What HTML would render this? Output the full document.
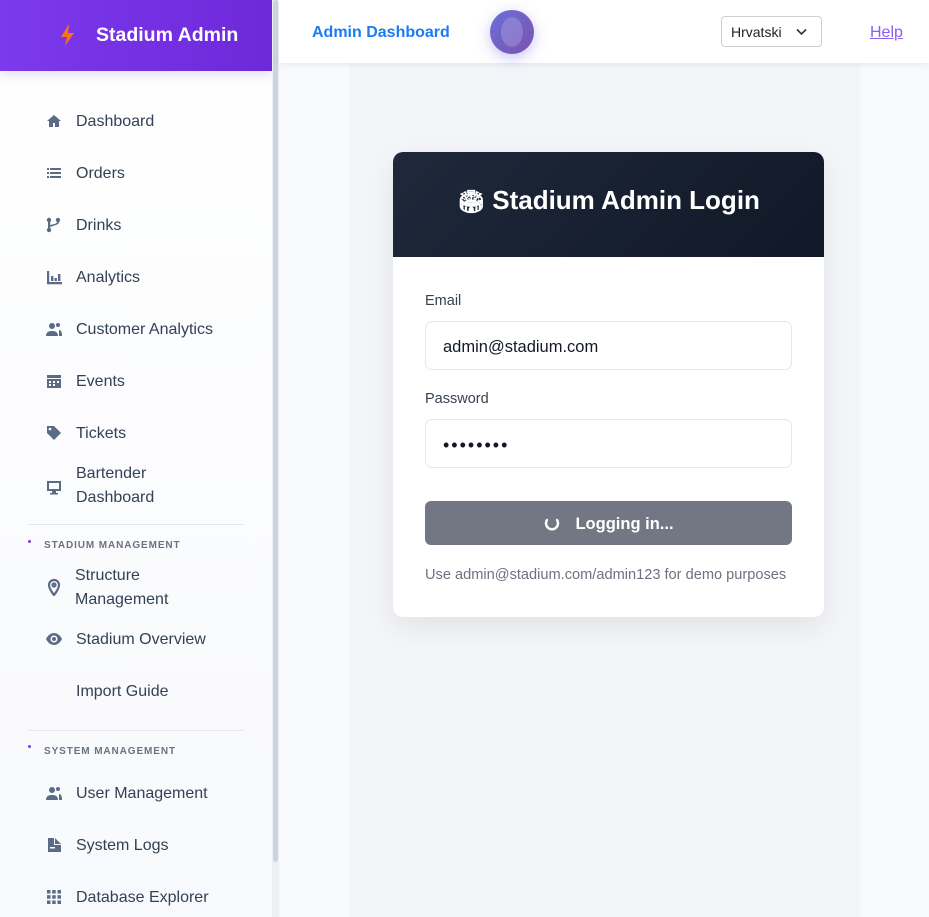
<!DOCTYPE html>
<html><head><meta charset="utf-8"><style>
*{box-sizing:border-box;margin:0;padding:0}
body{width:929px;height:917px;overflow:hidden;font-family:"Liberation Sans","DejaVu Sans",sans-serif;background:#f8f9fb;position:relative}
.sb{position:absolute;left:0;top:0;width:272px;height:917px;background:linear-gradient(#fff,#f8f9fc)}
.sbh{position:absolute;left:0;top:0;width:272px;height:71px;background:linear-gradient(90deg,#7c3aed,#6d28d9);box-shadow:0 4px 10px rgba(80,40,160,.15)}
.sbh span{position:absolute;left:96px;top:24px;color:#fff;font-weight:bold;font-size:19.5px}
.scroll{position:absolute;left:272px;top:0;width:7px;height:917px;background:#eef0f4}
.scroll i{position:absolute;left:1px;top:0;width:5px;height:862px;background:#cbd5e1;border-radius:3px}
.it{position:absolute;left:76px;color:#334155;font-size:16px;line-height:24px;margin-top:2px}
.ic{position:absolute;left:45px;width:18px;height:18px;margin-top:1px}
.div{position:absolute;left:28px;width:216px;height:1px;background:#e2e8f0}
.sec{position:absolute;left:44px;font-size:10px;font-weight:bold;letter-spacing:.9px;color:#6b7280;margin-top:1px}
.dot{position:absolute;left:28px;width:3px;height:3px;border-radius:50%;background:#7c3aed}
.top{position:absolute;left:279px;top:0;width:650px;height:63px;background:#fff;box-shadow:0 2px 6px rgba(0,0,0,.06)}
.panel{position:absolute;left:349px;top:63px;width:511px;height:854px;background:#f4f5f9}
.card{position:absolute;left:393px;top:152px;width:431px;height:465px;background:#fff;border-radius:10px;box-shadow:0 10px 30px rgba(0,0,0,.08);overflow:hidden}
.ch{height:105px;background:linear-gradient(135deg,#1e293b,#111827);color:#fff;font-weight:bold;font-size:26px;text-align:center;line-height:96px}
.lbl{position:absolute;left:32px;font-size:14.5px;color:#374151}
.inp{position:absolute;left:32px;width:367px;height:49px;border:1px solid #e2e8f0;border-radius:7px;font-size:16.5px;color:#111827;padding-left:17px;line-height:50px}
.btn{position:absolute;left:32px;top:349px;width:367px;height:44px;background:#737783;border-radius:6px;color:#fff;font-weight:bold;font-size:16.5px;line-height:46px;text-align:center}
</style></head><body>
<div class="sb"></div>
<div class="sbh"><svg style="position:absolute;left:60px;top:24px" width="16" height="22" viewBox="0 0 16 22"><path d="M9 0L1 13h6l-2 9 9-13H8z" fill="#f97316"/></svg><span>Stadium Admin</span></div>
<div class="scroll"><i></i></div>

<svg class="ic" style="top:111px" viewBox="0 0 18 18"><path d="M9 3L2 9h2v6h4v-4h2v4h4V9h2z" fill="#5b6b85"/></svg>
<div class="it" style="top:108px">Dashboard</div>
<svg class="ic" style="top:163px" viewBox="0 0 18 18" fill="#5b6b85"><rect x="2" y="4" width="2" height="2"/><rect x="5" y="4" width="11" height="2"/><rect x="2" y="8" width="2" height="2"/><rect x="5" y="8" width="11" height="2"/><rect x="2" y="12" width="2" height="2"/><rect x="5" y="12" width="11" height="2"/></svg>
<div class="it" style="top:160px">Orders</div>
<svg class="ic" style="top:215px" viewBox="0 0 18 18" fill="#5b6b85"><circle cx="4" cy="4" r="2.2"/><circle cx="4" cy="14" r="2.2"/><circle cx="13" cy="4" r="2.2"/><rect x="3" y="4" width="2.2" height="10"/><path d="M12 5h2.2c0 4-4 4-9 6V9c4-1 7-1 7-4z"/></svg>
<div class="it" style="top:212px">Drinks</div>
<svg class="ic" style="top:267px" viewBox="0 0 18 18" fill="#5b6b85"><path d="M2 3h2.2v11H17v2.2H2z"/><rect x="6" y="8" width="2.4" height="5"/><rect x="9.5" y="10" width="2.4" height="3"/><rect x="13" y="6" width="2.4" height="7"/></svg>
<div class="it" style="top:264px">Analytics</div>
<svg class="ic" style="top:319px" viewBox="0 0 18 18" fill="#5b6b85"><circle cx="7" cy="6" r="3"/><path d="M1 16c0-4 3-5 6-5s6 1 6 5z"/><circle cx="13" cy="5" r="2"/><path d="M14 10c2 0 3 2 3 6h-3z"/></svg>
<div class="it" style="top:316px">Customer Analytics</div>
<svg class="ic" style="top:371px" viewBox="0 0 18 18" fill="#5b6b85"><rect x="2" y="3" width="14" height="3"/><path d="M2 7h14v9H2z"/><g fill="#fff"><rect x="4" y="9" width="2" height="2"/><rect x="8" y="9" width="2" height="2"/><rect x="12" y="9" width="2" height="2"/><rect x="4" y="12" width="2" height="2"/><rect x="8" y="12" width="2" height="2"/></g></svg>
<div class="it" style="top:368px">Events</div>
<svg class="ic" style="top:423px" viewBox="0 0 18 18" fill="#5b6b85"><path d="M2 2h7l7 7-7 7-7-7z"/><circle cx="5" cy="5" r="1.3" fill="#fff"/></svg>
<div class="it" style="top:420px">Tickets</div>
<svg class="ic" style="top:477px" viewBox="0 0 18 18" fill="#5b6b85"><path d="M2 3h14v10H2zM4 5v6h10V5z"/><rect x="7" y="13" width="4" height="2"/><rect x="5" y="15" width="8" height="1.5"/></svg>
<div class="it" style="top:460px">Bartender<br>Dashboard</div>

<div class="div" style="top:524px"></div>
<div class="dot" style="top:540px"></div>
<div class="sec" style="top:539px">STADIUM MANAGEMENT</div>
<svg class="ic" style="top:577px" viewBox="0 0 18 18" fill="none" stroke="#5b6b85" stroke-width="2.2"><path d="M9 17s5-6 5-10a5 5 0 0 0-10 0c0 4 5 10 5 10z"/><circle cx="9" cy="7" r="1.5"/></svg>
<div class="it" style="top:562px;left:75px">Structure<br>Management</div>
<svg class="ic" style="top:629px" viewBox="0 0 18 18"><path d="M1 9c2-4 5-6 8-6s6 2 8 6c-2 4-5 6-8 6s-6-2-8-6z" fill="#5b6b85"/><circle cx="9" cy="9" r="3.5" fill="#fff"/><circle cx="9" cy="9" r="2" fill="#5b6b85"/></svg>
<div class="it" style="top:626px">Stadium Overview</div>
<div class="it" style="top:678px">Import Guide</div>

<div class="div" style="top:730px"></div>
<div class="dot" style="top:745px"></div>
<div class="sec" style="top:745px">SYSTEM MANAGEMENT</div>
<svg class="ic" style="top:783px" viewBox="0 0 18 18" fill="#5b6b85"><circle cx="7" cy="6" r="3"/><path d="M1 16c0-4 3-5 6-5s6 1 6 5z"/><circle cx="13" cy="5" r="2"/><path d="M14 10c2 0 3 2 3 6h-3z"/></svg>
<div class="it" style="top:780px">User Management</div>
<svg class="ic" style="top:835px" viewBox="0 0 18 18" fill="#5b6b85"><path d="M3 2h6v7h7v7H3z"/><path d="M10 2l6 6h-6z"/><rect x="5" y="11" width="5" height="1.5" fill="#fff"/></svg>
<div class="it" style="top:832px">System Logs</div>
<svg class="ic" style="top:887px" viewBox="0 0 18 18" fill="#5b6b85"><rect x="2" y="2" width="3.5" height="3.5"/><rect x="7.2" y="2" width="3.5" height="3.5"/><rect x="12.5" y="2" width="3.5" height="3.5"/><rect x="2" y="7.2" width="3.5" height="3.5"/><rect x="7.2" y="7.2" width="3.5" height="3.5"/><rect x="12.5" y="7.2" width="3.5" height="3.5"/><rect x="2" y="12.5" width="3.5" height="3.5"/><rect x="7.2" y="12.5" width="3.5" height="3.5"/><rect x="12.5" y="12.5" width="3.5" height="3.5"/></svg>
<div class="it" style="top:884px">Database Explorer</div>

<div class="panel"></div>
<div class="top">
<div style="position:absolute;left:33px;top:24px;color:#1d7bf0;font-weight:bold;font-size:16px">Admin Dashboard</div>
<div style="position:absolute;left:211px;top:10px;width:44px;height:44px;border-radius:50%;background:linear-gradient(135deg,#6b6fd8,#7b52b0);box-shadow:0 4px 14px rgba(100,90,220,.35)"><div style="position:absolute;left:11px;top:7px;width:22px;height:30px;border-radius:50%;background:rgba(255,255,255,.18)"></div></div>
<div style="position:absolute;left:442px;top:16px;width:101px;height:31px;border:1px solid #cbd0d8;border-radius:4px;font-size:14px;color:#222;padding-left:9px;line-height:30px">Hrvatski<svg style="position:absolute;left:74px;top:11px" width="11" height="8" viewBox="0 0 11 8"><path d="M1 1.5l4.5 4.5 4.5-4.5" fill="none" stroke="#333" stroke-width="1.6"/></svg></div>
<div style="position:absolute;left:591px;top:24px;font-size:16px;color:#8b5cf6;text-decoration:underline">Help</div>
</div>

<div class="card">
<div class="ch"><span style="font-family:'DejaVu Sans',sans-serif;font-size:22px">🏟</span> Stadium Admin Login</div>
<div class="lbl" style="top:141px">Email</div>
<div class="inp" style="top:169px">admin@stadium.com</div>
<div class="lbl" style="top:239px">Password</div>
<div class="inp" style="top:267px;letter-spacing:2px;font-size:18px">••••••••</div>
<div class="btn"><svg style="position:relative;top:3px;margin-right:14px" width="18" height="18" viewBox="0 0 18 18"><path d="M4 6a6 6 0 1 0 10 0" fill="none" stroke="#fff" stroke-width="2.4" stroke-linecap="round"/></svg>Logging in...</div>
<div style="position:absolute;left:32px;top:415px;font-size:14.6px;color:#6b7280">Use admin@stadium.com/admin123 for demo purposes</div>
</div>
</body></html>
